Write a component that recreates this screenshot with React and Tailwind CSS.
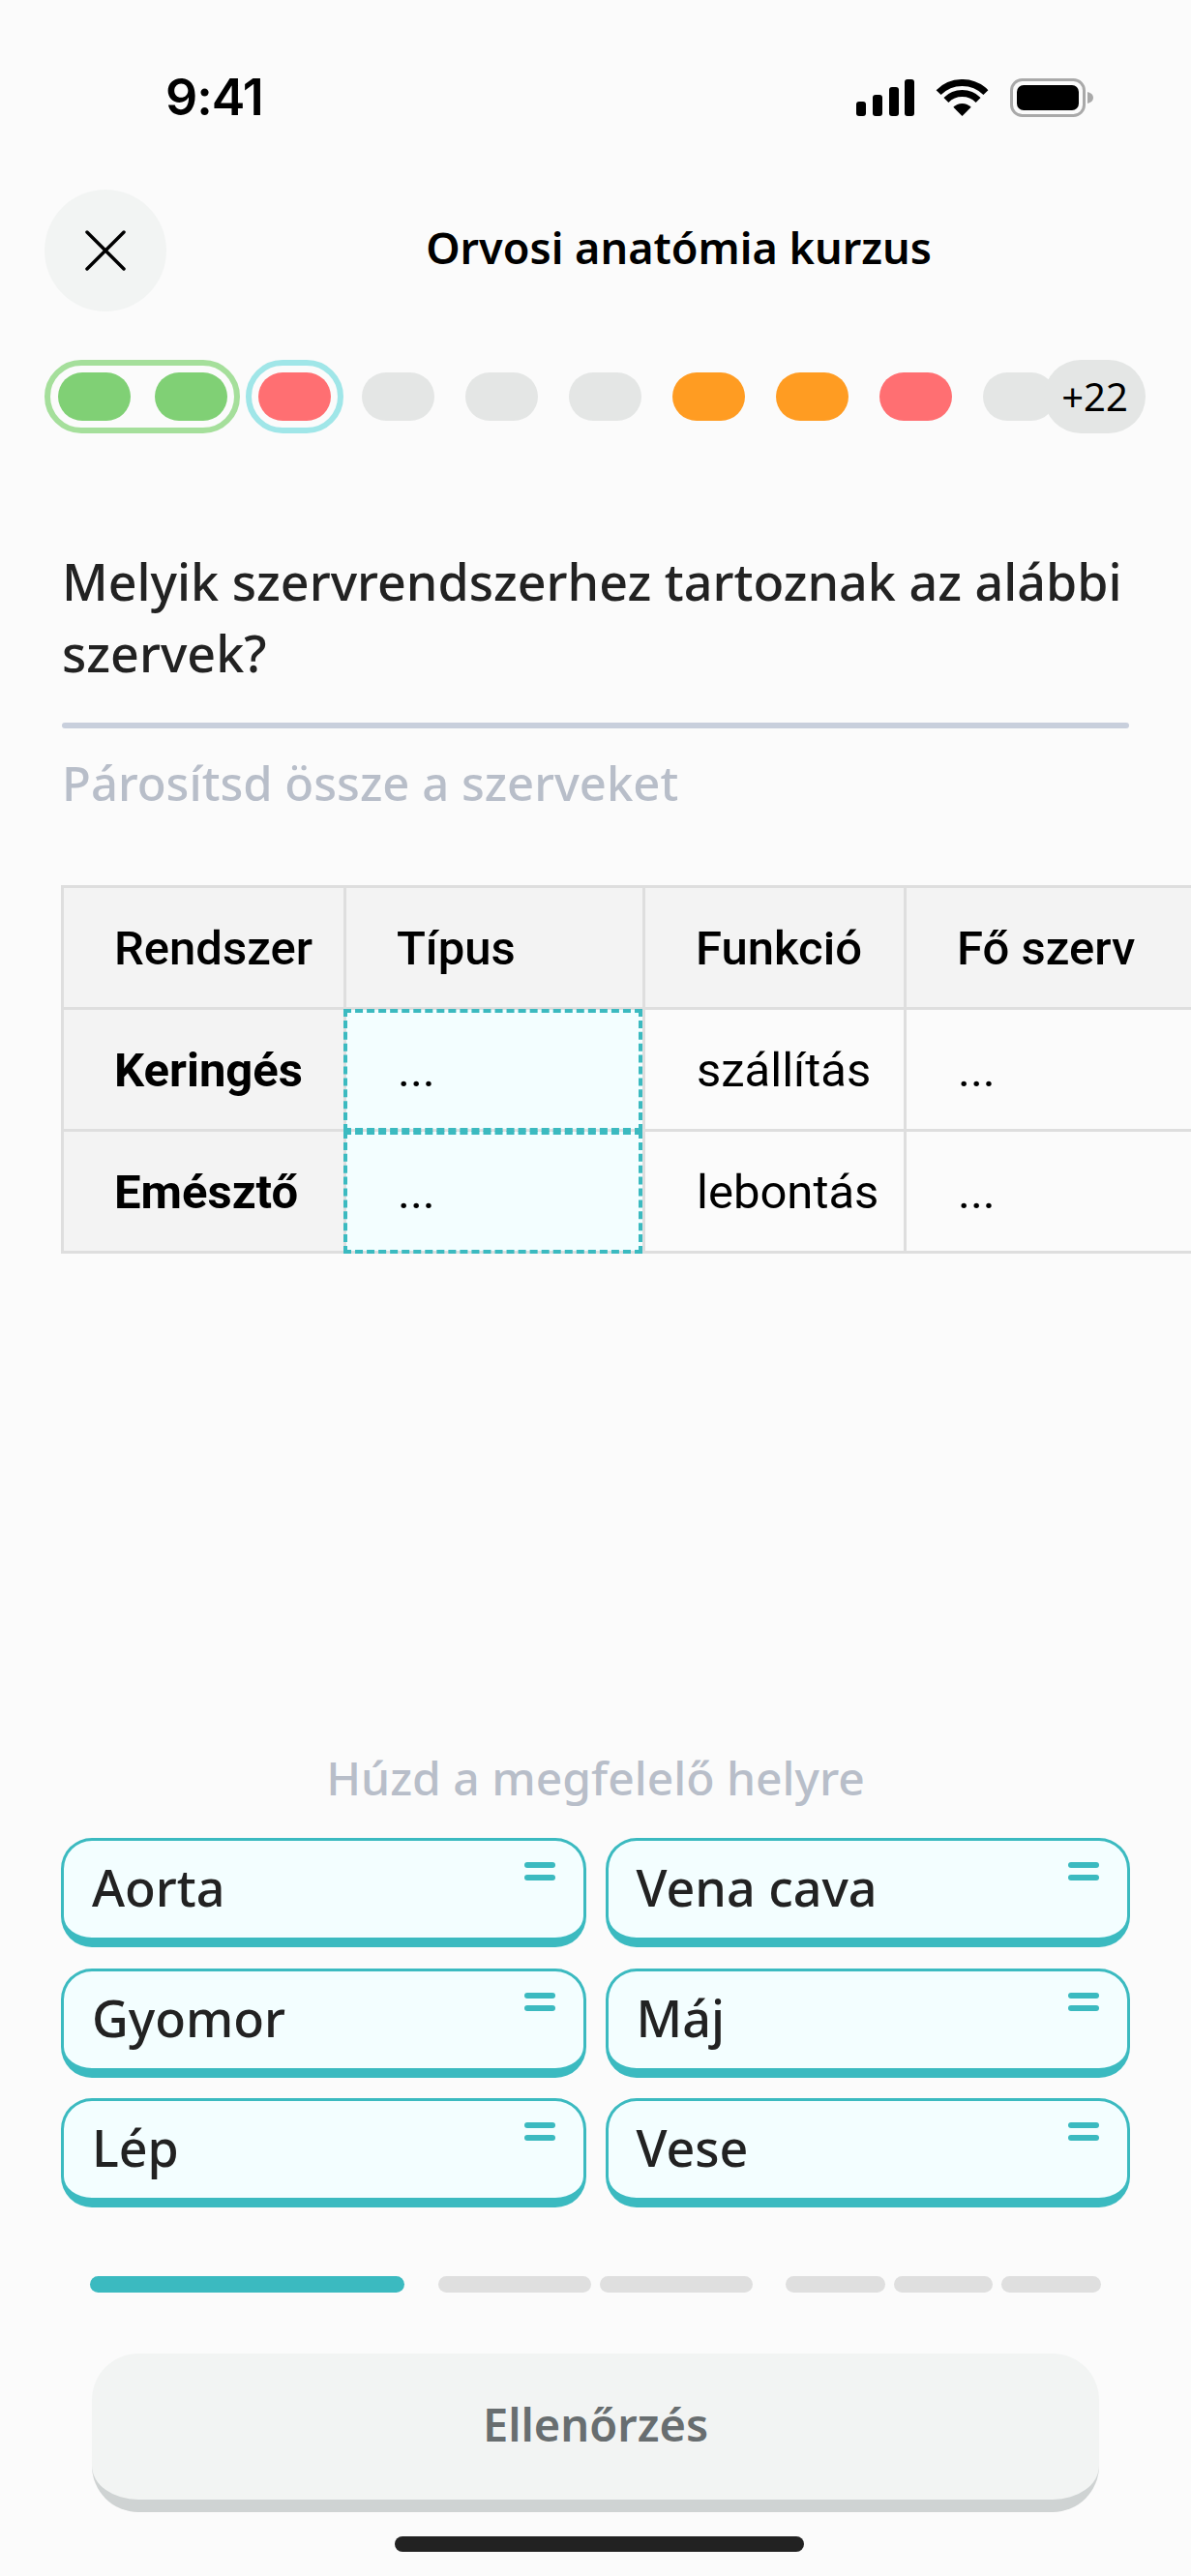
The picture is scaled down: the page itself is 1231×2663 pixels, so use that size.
import React from 'react';

const ui = { fontFamily: '"Noto Sans", sans-serif' };
const cellFont = { fontFamily: 'Roboto, sans-serif' };

function Pill({ color }) {
  return <div className={`w-[75px] h-[50px] rounded-full ${color}`} />;
}

function StatusIcons() {
  return (
    <div className="flex items-center">
      <svg width="60" height="38" viewBox="0 0 60 38" fill="#000">
        <rect x="0" y="23" width="10" height="15" rx="3" />
        <rect x="17" y="16" width="10" height="22" rx="3" />
        <rect x="34" y="8" width="10" height="30" rx="3" />
        <rect x="50" y="0" width="10" height="38" rx="3" />
      </svg>
      <svg className="ml-[22px]" width="55" height="38" viewBox="0 0 55 38">
        <path d="M3.1 13.6A34.5 34.5 0 0 1 51.9 13.6" fill="none" stroke="#000" strokeWidth="7" />
        <path d="M10.9 21.4A23.5 23.5 0 0 1 44.1 21.4" fill="none" stroke="#000" strokeWidth="7" />
        <path d="M27.5 38L18.3 28.8A13 13 0 0 1 36.7 28.8Z" fill="#000" />
      </svg>
      <svg className="ml-[22px]" width="86" height="40" viewBox="0 0 86 40">
        <rect x="1.5" y="1.5" width="75" height="37" rx="11" fill="none" stroke="#a9a9a9" strokeWidth="3" />
        <rect x="7" y="7" width="64" height="26" rx="7" fill="#000" />
        <path d="M80 14C84 15 86 17 86 20C86 23 84 25 80 26Z" fill="#a9a9a9" />
      </svg>
    </div>
  );
}

function HeadCell({ children, bold }) {
  return (
    <div className={`h-[126px] flex items-center pl-[52px] pt-[2px] border-r-[3px] border-b-[3px] border-[#dedede] bg-[#f3f3f3] text-[49px] text-black ${bold ? 'font-bold' : 'font-medium'}`}>
      {children}
    </div>
  );
}

function Cell({ children }) {
  return (
    <div className="h-[126px] flex items-center pl-[53px] pt-[2px] border-r-[3px] border-b-[3px] border-[#dedede] text-[49px] text-black">
      {children}
    </div>
  );
}

function DropCell() {
  return (
    <div className="relative h-[126px] flex items-center pl-[53px] pt-[2px] border-r-[3px] border-b-[3px] border-[#dedede] bg-[#f3feff] text-[49px] text-black">
      <div className="absolute -left-[3px] -top-[1px] right-0 -bottom-[3px] border-[4px] border-dashed border-[#3bbac0]" />
      ...
    </div>
  );
}

function Chip({ label }) {
  return (
    <div className="relative h-[113px] pl-[29px] pt-[17px] rounded-[32px] border-[3px] border-b-[10px] border-[#3bbac0] bg-[#f3feff] text-[52px] font-medium leading-[62px] text-[#222]">
      {label}
      <div className="absolute top-[22px] right-[29px] w-[32px] flex flex-col gap-[7px]">
        <div className="h-[6px] rounded-full bg-[#3bbac0]" />
        <div className="h-[6px] rounded-full bg-[#3bbac0]" />
      </div>
    </div>
  );
}

export default function App() {
  const chips = ['Aorta', 'Vena cava', 'Gyomor', 'Máj', 'Lép', 'Vese'];

  return (
    <div className="relative w-[1231px] h-[2663px] overflow-hidden bg-[#fbfbfb]" style={ui}>
      {/* status bar */}
      <div className="flex items-center justify-between h-[40px] mt-[81px] pl-[171px] pr-[101px]">
        <span className="text-[52px] font-semibold text-black tracking-[-1px]" style={{ fontFamily: 'Inter, sans-serif' }}>9:41</span>
        <StatusIcons />
      </div>

      {/* header */}
      <div className="relative flex items-center h-[126px] mt-[75px] pl-[46px]">
        <div className="w-[126px] h-[126px] rounded-full bg-[#f2f4f3] flex items-center justify-center">
          <svg width="42" height="42" viewBox="0 0 42 42" stroke="#000" strokeWidth="3.5" strokeLinecap="round">
            <path d="M2 2L40 40M40 2L2 40" />
          </svg>
        </div>
        <div className="flex-1 text-center pb-[6px] text-[45px] font-semibold text-black">Orvosi anatómia kurzus</div>
      </div>

      {/* lesson pills */}
      <div className="relative flex items-center h-[76px] mt-[50px] pl-[46px]">
        <div className="flex items-center justify-center gap-[25px] w-[202px] h-[76px] rounded-full border-[6px] border-[#a5df9b]">
          <Pill color="bg-[#80d075]" />
          <Pill color="bg-[#80d075]" />
        </div>
        <div className="flex items-center justify-center w-[101px] h-[76px] ml-[6px] rounded-full border-[6px] border-[#a0e6e8]">
          <Pill color="bg-[#ff6f72]" />
        </div>
        <div className="flex gap-[32px] ml-[19px]">
          <Pill color="bg-[#e4e6e5]" />
          <Pill color="bg-[#e4e6e5]" />
          <Pill color="bg-[#e4e6e5]" />
          <Pill color="bg-[#ff9c22]" />
          <Pill color="bg-[#ff9c22]" />
          <Pill color="bg-[#ff6f72]" />
          <Pill color="bg-[#e4e6e5]" />
        </div>
        <div className="absolute left-[1079px] top-0 w-[105px] h-[76px] rounded-full bg-[#e4e6e5] flex items-center justify-center text-[40px] text-black">+22</div>
      </div>

      {/* question */}
      <div className="mt-[116px] mx-[64px] text-[52px] font-medium leading-[74px] text-[#222]">
        Melyik szervrendszerhez tartoznak az alábbi szervek?
      </div>
      <div className="h-[6px] mt-[35px] mx-[64px] w-[1103px] bg-[#c8cfdc] rounded-full" />
      <div className="mt-[25px] ml-[64px] text-[49px] font-medium leading-[62px] text-[#b8bec9]">Párosítsd össze a szerveket</div>

      {/* table */}
      <div className="mt-[75px] ml-[63px] w-[1168px] grid grid-cols-[292px_309px_270px_297px] border-t-[3px] border-l-[3px] border-[#dedede]" style={cellFont}>
        <HeadCell>Rendszer</HeadCell>
        <HeadCell>Típus</HeadCell>
        <HeadCell>Funkció</HeadCell>
        <HeadCell>Fő szerv</HeadCell>
        <HeadCell bold>Keringés</HeadCell>
        <DropCell />
        <Cell>szállítás</Cell>
        <Cell>...</Cell>
        <HeadCell bold>Emésztő</HeadCell>
        <DropCell />
        <Cell>lebontás</Cell>
        <Cell>...</Cell>
      </div>

      {/* answer chips */}
      <div className="mt-[511px] text-center text-[48px] font-medium leading-[62px] text-[#b8bec9]">Húzd a megfelelő helyre</div>
      <div className="mt-[31px] mx-[63px] w-[1105px] grid grid-cols-2 gap-x-[20px] gap-y-[21.5px]">
        {chips.map((c) => <Chip key={c} label={c} />)}
      </div>

      {/* step progress */}
      <div className="flex h-[17px] mt-[71px] ml-[93px]">
        <div className="w-[325px] rounded-full bg-[#3bbac0]" />
        <div className="w-[158px] ml-[35px] rounded-full bg-[#dfdfdf]" />
        <div className="w-[158px] ml-[9px] rounded-full bg-[#dfdfdf]" />
        <div className="w-[103px] ml-[34px] rounded-full bg-[#dfdfdf]" />
        <div className="w-[102px] ml-[9px] rounded-full bg-[#dfdfdf]" />
        <div className="w-[103px] ml-[9px] rounded-full bg-[#dfdfdf]" />
      </div>

      {/* check button */}
      <div className="flex items-center justify-center h-[164px] pb-[4px] mt-[63px] mx-[95px] w-[1041px] rounded-[48px] border-b-[13px] border-[#cfd3d3] bg-[#f2f4f3] text-[47px] font-semibold text-[#686e70]">
        Ellenőrzés
      </div>

      {/* home indicator */}
      <div className="w-[423px] h-[16px] mt-[25px] ml-[408px] rounded-full bg-[#222]" />
    </div>
  );
}
